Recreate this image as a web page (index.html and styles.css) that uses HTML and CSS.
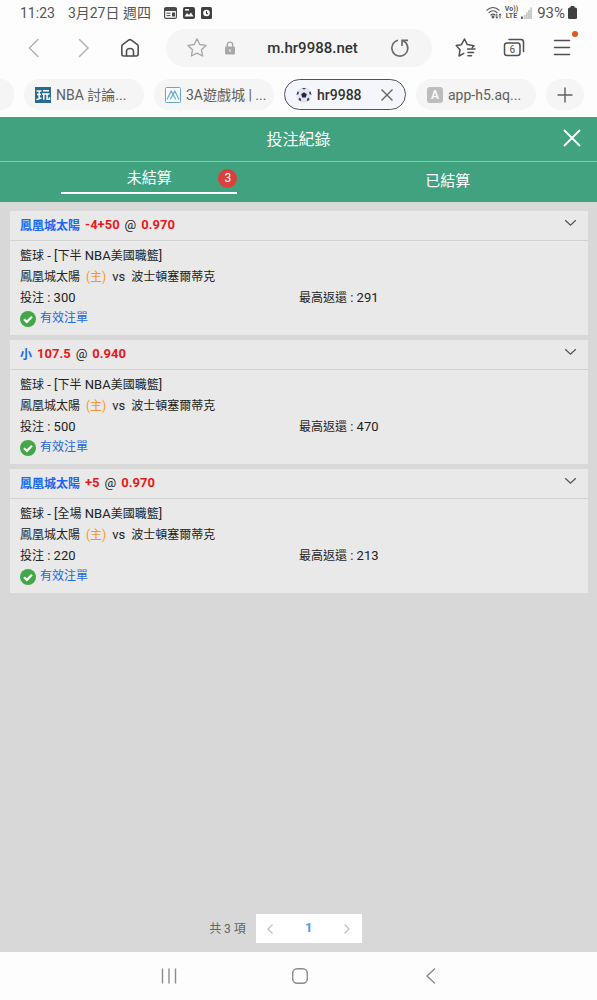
FILE: index.html
```html
<!DOCTYPE html>
<html lang="zh-Hant">
  <head>
    <meta charset="UTF-8" />
    <meta name="viewport" content="width=device-width, initial-scale=1.0" />
    <title>投注紀錄</title>
    <link rel="stylesheet" href="styles.css">
  </head>
  <body>
    <div class="status-bar">
      <span class="clock">11:23</span>
      <span class="date">3月27日 週四</span>
      <div class="status-icons">
        <svg width="13" height="12" viewBox="0 0 13 12">
          <rect x="0.6" y="0.6" width="11.8" height="10.8" rx="1.5" fill="none" stroke="#4a4a4a" stroke-width="1.2" />
          <path d="M0 1h13v3H0z" fill="#4a4a4a" />
          <path d="M2.5 6.2h4M2.5 8.6h4" stroke="#4a4a4a" stroke-width="1" />
          <rect x="8" y="5.5" width="3" height="4" fill="#4a4a4a" />
        </svg>
        <svg width="12" height="12" viewBox="0 0 12 12">
          <rect width="12" height="12" rx="2" fill="#404040" />
          <path d="M1.5 9.5 4 6l2 2 1.8-2.5 2.8 4z" fill="#fff" />
          <path d="M2 2h4v1.6H2z" fill="#fff" />
        </svg>
        <svg width="11" height="12" viewBox="0 0 11 12">
          <rect width="11" height="12" rx="1.5" fill="#404040" />
          <circle cx="5.5" cy="6" r="3.3" fill="#fff" />
          <path d="M5.5 4v2.3l1.5.8" fill="none" stroke="#404040" stroke-width="1.1" />
        </svg>
      </div>
      <div class="signal">
        <svg width="16" height="13" viewBox="0 0 16 13" fill="none" stroke="#555" stroke-width="1.2" stroke-linecap="round">
          <path d="M1 4.2C4.4.6 9.6.6 13 4.2M3 6.6c2.4-2.5 5.6-2.5 8 0M5 9c1.2-1.3 2.8-1.3 4 0" />
          <circle cx="7" cy="11" r="0.8" fill="#555" />
          <path d="M10.8 8v4M9.8 11l1 1 1-1M14 12V8M13 9l1-1 1 1" stroke-width="1" />
        </svg>
        <span class="volte">Vo))<br />LTE</span>
        <svg width="11" height="12" viewBox="0 0 11 12">
          <path d="M0 9.5h1.8V12H0z" fill="#555" />
          <path d="M2.8 8h1.9v4H2.8zM4.9 5.5h1.9V12H4.9zM7 3h1.9v9H7zM9.1.5H11V12H9.1z" fill="#c8c8c8" />
        </svg>
        <span class="battery">93%</span>
        <svg width="9" height="13" viewBox="0 0 9 13" fill="#404040">
          <rect x="2.5" width="4" height="3" rx="0.7" />
          <rect y="1.5" width="9" height="11.5" rx="1.5" />
        </svg>
      </div>
    </div>

    <div class="toolbar">
      <div class="tools">
        <button type="button" aria-label="上一頁">
          <svg width="24" height="24" viewBox="0 0 24 24" fill="none" stroke="#b5b5b5" stroke-width="1.5" stroke-linecap="round">
            <path d="M16 3.5 7.5 12l8.5 8.5" />
          </svg>
        </button>
        <button type="button" aria-label="下一頁">
          <svg width="24" height="24" viewBox="0 0 24 24" fill="none" stroke="#b5b5b5" stroke-width="1.5" stroke-linecap="round">
            <path d="M9.5 3.5 18 12l-8.5 8.5" />
          </svg>
        </button>
        <button type="button" aria-label="首頁">
          <svg width="24" height="24" viewBox="0 0 24 24" fill="none" stroke="#505050" stroke-width="1.6" stroke-linejoin="round">
            <path d="M3.8 10.4q0-1 .8-1.7l6-4.6q1.4-1 2.8 0l6 4.6q.8.7.8 1.7V18q0 2-2 2h-2.7v-4.5q0-3-3.5-3t-3.5 3V20H5.8q-2 0-2-2z" />
            <path d="M8.5 20h7" />
          </svg>
        </button>
      </div>

      <div class="address">
        <button type="button" aria-label="加入書籤">
          <svg width="22" height="22" viewBox="0 0 22 22" fill="none" stroke="#a8a8a8" stroke-width="1.4" stroke-linejoin="round">
            <path d="M11 1.8l2.8 5.7 6.2.9-4.5 4.4 1.1 6.2-5.6-2.9L5.4 19l1.1-6.2L2 8.4l6.2-.9z" />
          </svg>
        </button>
        <svg class="lock" width="10" height="14" viewBox="0 0 10 14">
          <path d="M2.3 6V3.8a2.7 2.7 0 0 1 5.4 0V6" fill="none" stroke="#a8a8a8" stroke-width="1.4" />
          <rect y="5.5" width="10" height="8" rx="1.2" fill="#a8a8a8" />
          <path d="M5 8.2v2.6" stroke="#f5f5f5" stroke-width="1.3" />
        </svg>
        <span class="url">m.hr9988.net</span>
        <button type="button" aria-label="重新整理">
          <svg width="20" height="20" viewBox="0 0 20 20" fill="none" stroke="#6a6a6a" stroke-width="1.6">
            <path d="M8 2.3A8 8 0 1 0 15.2 4.2L12.4 2.6" />
            <path d="M12 8V2.4h6" />
          </svg>
        </button>
      </div>

      <div class="tools">
        <button type="button" aria-label="書籤清單">
          <svg width="24" height="24" viewBox="0 0 24 24" fill="none" stroke="#505050" stroke-width="1.5" stroke-linejoin="round" stroke-linecap="round">
            <path d="M9.8 17.3 5 20l1-6.2-3.8-4.2 5.2-.9L10.5 3l2.8 5.6 6.6 1.1-1.6 1.8" />
            <path d="M13.5 13h7.5M14 16.4h5.5M14 19.8h3.5" />
          </svg>
        </button>
        <button type="button" class="tab-count" aria-label="分頁">
          <svg width="24" height="24" viewBox="0 0 24 24" fill="none" stroke="#505050" stroke-width="1.5" stroke-linecap="round">
            <rect x="2.5" y="7" width="15.5" height="12.5" rx="2.5" />
            <path d="M7 3.5h12q2.5 0 2.5 2.5v9.5" />
            <text x="10.2" y="17" text-anchor="middle" class="tab-number">6</text>
          </svg>
        </button>
        <button type="button" class="menu" aria-label="選單">
          <svg width="24" height="24" viewBox="0 0 24 24" fill="none" stroke="#505050" stroke-width="1.5" stroke-linecap="round">
            <path d="M4.5 4.5h15M4.5 11.5h15M4.5 18.5h15" />
          </svg>
          <span class="menu-dot"></span>
        </button>
      </div>
    </div>

    <div class="browser-tabs">
      <span class="page-tab cut"></span>
      <a href="#" class="page-tab">
        <svg width="16" height="16" viewBox="0 0 16 16">
          <rect width="16" height="16" fill="#286a91" />
          <path d="M1.5 4h5M2 7.5h4M4.2 4v7.5M1.5 12.5l5-1.5M8 3.8h6M7 7h7.5M8.8 7v5.8M12 7v5.3h2.5v-2" fill="none" stroke="#fff" stroke-width="1.5" />
        </svg>
        <span class="page-name">NBA 討論...</span>
      </a>
      <a href="#" class="page-tab">
        <svg width="16" height="16" viewBox="0 0 16 16" fill="none" stroke="#69a5cd">
          <rect x="0.5" y="0.5" width="15" height="15" rx="1" fill="#f6fbff" />
          <path d="M2 12.5 6.2 4 8 7.5 9.8 4l4.2 8.5M5.2 12.5 8 7.5l2.8 5" stroke-width="1.1" />
        </svg>
        <span class="page-name">3A遊戲城 | ...</span>
      </a>
      <a href="#" class="page-tab active">
        <svg width="16" height="16" viewBox="0 0 16 16">
          <circle cx="8" cy="8" r="7.6" fill="#e3e5ee" />
          <path d="M8 5.2l2.8 2-1 3.2H6.2l-1-3.2z" fill="#22253c" />
          <path d="M5.8.9h4.4L8 2.4zM.4 7.5l1.2-3 1.4.6-.7 2.4zM15.6 7.5l-1.2-3-1.4.6.7 2.4zM2.6 12.6l.4-1.8 1.6.5.6 2.2-1 .8zM13.4 12.6l-.4-1.8-1.6.5-.6 2.2 1 .8z" fill="#3d4057" />
        </svg>
        <span class="page-name">hr9988</span>
        <svg width="14" height="14" viewBox="0 0 14 14" stroke="#666" stroke-width="1.4">
          <path d="M1.5 1.5l11 11M12.5 1.5l-11 11" />
        </svg>
      </a>
      <a href="#" class="page-tab">
        <span class="letter-icon">A</span>
        <span class="page-name">app-h5.aq...</span>
      </a>
      <button type="button" class="new-tab" aria-label="新分頁">
        <svg width="16" height="16" viewBox="0 0 16 16" stroke="#606060" stroke-width="1.4">
          <path d="M8 .5v15M.5 8h15" />
        </svg>
      </button>
    </div>

    <header class="title-bar">
      <h1>投注紀錄</h1>
      <button type="button" class="close" aria-label="關閉">
        <svg width="18" height="18" viewBox="0 0 18 18" stroke="#fff" stroke-width="1.8" stroke-linecap="round">
          <path d="M1.5 1.5l15 15M16.5 1.5l-15 15" />
        </svg>
      </button>
    </header>

    <nav class="bet-tabs">
      <button type="button" class="bet-tab selected"><span class="tab-label">未結算<span class="badge">3</span></span></button>
      <button type="button" class="bet-tab"><span class="tab-label">已結算</span></button>
    </nav>

    <main>
      <div class="bet-list">
        <section class="bet">
          <div class="bet-head">
            <span class="pick">鳳凰城太陽</span>
            <span class="odds">-4+50</span>
            <span class="at">@</span>
            <span class="odds">0.970</span>
            <button type="button" class="toggle" aria-label="收合">
              <svg width="13" height="8" viewBox="0 0 13 8" fill="none" stroke="#555" stroke-width="1.3">
                <path d="M1.2 1.2l5.3 5 5.3-5" />
              </svg>
            </button>
          </div>
          <div class="bet-body">
            <div class="row">籃球<span class="num"> - [</span>下半<span class="num"> NBA</span>美國職籃<span class="num">]</span></div>
            <div class="row teams"><span>鳳凰城太陽</span><span class="host">(主)</span><span class="num">vs</span><span>波士頓塞爾蒂克</span></div>
            <div class="row amounts">
              <span>投注<span class="num"> : 300</span></span>
              <span>最高返還<span class="num"> : 291</span></span>
            </div>
            <div class="row state">
              <svg width="16" height="16" viewBox="0 0 16 16">
                <circle cx="8" cy="8" r="8" fill="#43a647" />
                <path d="M4 8.3l2.8 2.6 5.2-5.2" fill="none" stroke="#fff" stroke-width="2.2" />
              </svg>
              <span>有效注單</span>
            </div>
          </div>
        </section>

        <section class="bet">
          <div class="bet-head">
            <span class="pick">小</span>
            <span class="odds">107.5</span>
            <span class="at">@</span>
            <span class="odds">0.940</span>
            <button type="button" class="toggle" aria-label="收合">
              <svg width="13" height="8" viewBox="0 0 13 8" fill="none" stroke="#555" stroke-width="1.3">
                <path d="M1.2 1.2l5.3 5 5.3-5" />
              </svg>
            </button>
          </div>
          <div class="bet-body">
            <div class="row">籃球<span class="num"> - [</span>下半<span class="num"> NBA</span>美國職籃<span class="num">]</span></div>
            <div class="row teams"><span>鳳凰城太陽</span><span class="host">(主)</span><span class="num">vs</span><span>波士頓塞爾蒂克</span></div>
            <div class="row amounts">
              <span>投注<span class="num"> : 500</span></span>
              <span>最高返還<span class="num"> : 470</span></span>
            </div>
            <div class="row state">
              <svg width="16" height="16" viewBox="0 0 16 16">
                <circle cx="8" cy="8" r="8" fill="#43a647" />
                <path d="M4 8.3l2.8 2.6 5.2-5.2" fill="none" stroke="#fff" stroke-width="2.2" />
              </svg>
              <span>有效注單</span>
            </div>
          </div>
        </section>

        <section class="bet">
          <div class="bet-head">
            <span class="pick">鳳凰城太陽</span>
            <span class="odds">+5</span>
            <span class="at">@</span>
            <span class="odds">0.970</span>
            <button type="button" class="toggle" aria-label="收合">
              <svg width="13" height="8" viewBox="0 0 13 8" fill="none" stroke="#555" stroke-width="1.3">
                <path d="M1.2 1.2l5.3 5 5.3-5" />
              </svg>
            </button>
          </div>
          <div class="bet-body">
            <div class="row">籃球<span class="num"> - [</span>全場<span class="num"> NBA</span>美國職籃<span class="num">]</span></div>
            <div class="row teams"><span>鳳凰城太陽</span><span class="host">(主)</span><span class="num">vs</span><span>波士頓塞爾蒂克</span></div>
            <div class="row amounts">
              <span>投注<span class="num"> : 220</span></span>
              <span>最高返還<span class="num"> : 213</span></span>
            </div>
            <div class="row state">
              <svg width="16" height="16" viewBox="0 0 16 16">
                <circle cx="8" cy="8" r="8" fill="#43a647" />
                <path d="M4 8.3l2.8 2.6 5.2-5.2" fill="none" stroke="#fff" stroke-width="2.2" />
              </svg>
              <span>有效注單</span>
            </div>
          </div>
        </section>
      </div>

      <div class="pagination">
        <span class="total">共 3 項</span>
        <div class="pages">
          <button type="button" aria-label="上一頁">
            <svg width="8" height="12" viewBox="0 0 8 12" fill="none" stroke="#c0c4cc" stroke-width="1.4">
              <path d="M6.5 1.5 2 6l4.5 4.5" />
            </svg>
          </button>
          <button type="button" class="current">1</button>
          <button type="button" aria-label="下一頁">
            <svg width="8" height="12" viewBox="0 0 8 12" fill="none" stroke="#c0c4cc" stroke-width="1.4">
              <path d="M1.5 1.5 6 6l-4.5 4.5" />
            </svg>
          </button>
        </div>
      </div>
    </main>

    <div class="system-nav">
      <button type="button" aria-label="最近">
        <svg width="18" height="18" viewBox="0 0 18 18" stroke="#8c8c8c" stroke-width="1.4">
          <path d="M2.5 1.5v15M9 1.5v15M15.5 1.5v15" />
        </svg>
      </button>
      <button type="button" aria-label="主畫面">
        <svg width="18" height="18" viewBox="0 0 18 18" fill="none" stroke="#8c8c8c" stroke-width="1.4">
          <rect x="1.7" y="1.7" width="14.6" height="14.6" rx="4.5" />
        </svg>
      </button>
      <button type="button" aria-label="返回">
        <svg width="18" height="18" viewBox="0 0 18 18" fill="none" stroke="#8c8c8c" stroke-width="1.4">
          <path d="M13 1.5 5 9l8 7.5" />
        </svg>
      </button>
    </div>
  </body>
</html>
```
FILE: styles.css
```css
/* General styles */
* {
  box-sizing: border-box;
}

body {
  font-family: Roboto, "Noto Sans CJK TC", sans-serif;
  font-size: 12px;
  color: #222;
  background-color: #fdfdfd;
  margin: 0;
  min-height: 100vh;
  display: flex;
  flex-direction: column;
}

button {
  font-family: inherit;
  padding: 0;
  border: none;
  background: none;
  cursor: pointer;
  display: flex;
  justify-content: center;
  align-items: center;
}

svg {
  display: block;
  flex-shrink: 0;
}

/* Status bar */
.status-bar {
  display: flex;
  align-items: center;
  height: 25px;
  padding: 0 20px;
  font-size: 14px;
  line-height: 24px;
  color: #555;
}

.date {
  margin-left: 13px;
}

.status-icons {
  display: flex;
  gap: 6px;
  margin-left: 13px;
}

.signal {
  display: flex;
  align-items: center;
  gap: 3px;
  margin-left: auto;
}

.volte {
  font-size: 7px;
  font-weight: bold;
  line-height: 7px;
  text-align: center;
}

.battery {
  font-size: 15px;
  margin-left: 2px;
}

/* Browser toolbar */
.toolbar {
  display: flex;
  align-items: center;
  padding: 4px 11px 0 10px;
}

.tools {
  display: grid;
  grid-template-columns: repeat(3, 48px);
}

.address {
  display: flex;
  flex: 1;
  align-items: center;
  height: 38px;
  margin: 0 10px 0 12px;
  padding: 0 22px 0 20px;
  border-radius: 19px;
  background-color: #f5f5f5;
}

.lock {
  margin-left: 17px;
}

.url {
  flex: 1;
  text-align: center;
  font-size: 15px;
  font-weight: 500;
  color: #333;
}

.tab-number {
  font-size: 10px;
  fill: #505050;
  stroke: none;
}

.menu {
  position: relative;
}

.menu-dot {
  position: absolute;
  top: -5px;
  right: 8px;
  width: 6px;
  height: 6px;
  border-radius: 50%;
  background-color: #e2571f;
}

/* Open pages */
.browser-tabs {
  display: flex;
  gap: 10px;
  padding: 12px 13px 7px 0;
}

.page-tab {
  display: flex;
  flex: 1;
  align-items: center;
  gap: 5px;
  min-width: 0;
  height: 31px;
  padding: 0 11px;
  border-radius: 16px;
  background-color: #f5f5f5;
  color: #606060;
  font-size: 14px;
  text-decoration: none;
  white-space: nowrap;
}

.page-tab.cut {
  flex: 0 0 14px;
  padding: 0;
  border-radius: 0 16px 16px 0;
}

.page-tab.active {
  border: 1px solid #4a5270;
  background-color: #f5f6fb;
  color: #333;
  font-weight: 500;
}

.page-name {
  flex: 1;
  line-height: 20px;
}

.letter-icon {
  width: 16px;
  border-radius: 3px;
  background-color: #bdbdbd;
  color: #fff;
  font-size: 12px;
  font-weight: 500;
  line-height: 16px;
  text-align: center;
}

.new-tab {
  width: 38px;
  height: 31px;
  border-radius: 16px;
  background-color: #f5f5f5;
}

/* Title and tabs */
.title-bar {
  display: grid;
  grid-template-columns: 1fr auto 1fr;
  align-items: center;
  height: 45px;
  padding: 0 16px 2px;
  border-bottom: 1px solid #8cc9b2;
  background-color: #40a27f;
  color: #fff;
}

.title-bar h1 {
  grid-column: 2;
  margin: 0;
  font-size: 16px;
  font-weight: normal;
}

.close {
  justify-self: end;
}

.bet-tabs {
  display: grid;
  grid-template-columns: 1fr 1fr;
  height: 40px;
  background-color: #40a27f;
}

.bet-tab {
  padding-bottom: 2px;
  color: #fff;
  font-size: 15px;
}

.bet-tab.selected {
  padding-bottom: 7px;
}

.tab-label {
  position: relative;
  width: 59%;
  line-height: 28px;
}

.selected .tab-label {
  border-bottom: 2px solid #fff;
}

.badge {
  position: absolute;
  top: 5px;
  right: 0;
  width: 19px;
  height: 19px;
  border-radius: 50%;
  background-color: #dc403c;
  font-size: 12px;
  line-height: 19px;
  text-align: center;
}

/* Bet records */
main {
  display: flex;
  flex: 1;
  flex-direction: column;
  justify-content: space-between;
  padding: 9px 9px 9px 10px;
  background-color: #d8d8d8;
}

.bet-list {
  display: flex;
  flex-direction: column;
  gap: 5px;
}

.bet {
  background-color: #e9e9e9;
}

.bet-head {
  display: flex;
  align-items: center;
  gap: 5px;
  height: 30px;
  padding: 0 11px 2px 10px;
  border-bottom: 1px solid #d2d2d2;
  font-size: 13px;
}

.pick {
  color: #1a66f0;
  font-size: 12px;
  font-weight: bold;
}

.odds {
  color: #e8191c;
  font-weight: bold;
}

.toggle {
  height: 24px;
  padding-bottom: 3px;
  margin-left: auto;
}

.bet-body {
  padding: 4px 10px 6px;
}

.row {
  height: 21px;
  line-height: 21px;
}

.num {
  font-size: 13px;
}

.teams {
  display: flex;
  align-items: baseline;
  gap: 6px;
}

.host {
  color: #f5962a;
}

.amounts {
  display: grid;
  grid-template-columns: 1fr 1fr;
}

.state {
  display: flex;
  align-items: center;
  gap: 4px;
  color: #2467d6;
}

/* Pagination */
.pagination {
  display: flex;
  justify-content: center;
  align-items: center;
  gap: 10px;
  padding-right: 27px;
}

.total {
  padding-bottom: 2px;
  color: #666;
}

.pages {
  display: grid;
  grid-template-columns: 29px 48px 29px;
  height: 29px;
  background-color: #fff;
}

.current {
  padding-bottom: 2px;
  color: #409eea;
  font-size: 13px;
  font-weight: bold;
}

/* System navigation */
.system-nav {
  display: grid;
  grid-template-columns: repeat(3, 22%);
  justify-content: center;
  height: 48px;
  padding-left: 3px;
}
```
